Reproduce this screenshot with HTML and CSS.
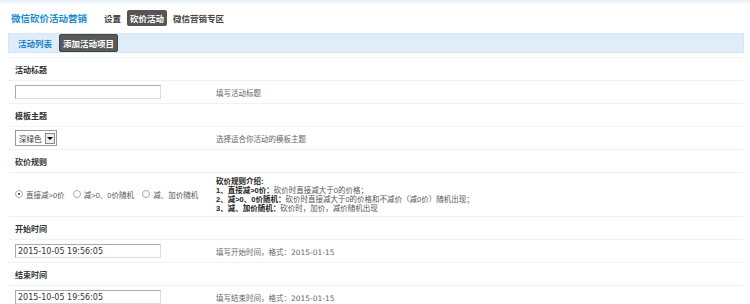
FILE: index.html
```html
<!DOCTYPE html>
<html>
<head>
    <title>微信砍价活动营销</title>
    <meta charset="UTF-8">
    <link rel="stylesheet" href="styles.css">
</head>
<body>
    <div class="topline"></div>
    <div class="header">
        <span class="logo">微信砍价活动营销</span>
        <a class="nav">设置</a>
        <a class="nav on">砍价活动</a>
        <a class="nav">微信营销专区</a>
    </div>
    <div class="tabs">
        <a class="tab">活动列表</a>
        <a class="tab on">添加活动项目</a>
    </div>
    <table class="form">
        <tr class="head"><td colspan="2">活动标题</td></tr>
        <tr>
            <td class="left"><input type="text" class="txt"></td>
            <td class="tip">填写活动标题</td>
        </tr>
        <tr class="head"><td colspan="2">模板主题</td></tr>
        <tr>
            <td class="left">
                <span class="select">深绿色<span class="arrow"></span></span>
            </td>
            <td class="tip">选择适合你活动的模板主题</td>
        </tr>
        <tr class="head"><td colspan="2">砍价规则</td></tr>
        <tr class="rules">
            <td class="left">
                <label class="radio"><span class="dot on"></span>直接减&gt;0价</label>
                <label class="radio"><span class="dot"></span>减&gt;0、0价随机</label>
                <label class="radio"><span class="dot"></span>减、加价随机</label>
            </td>
            <td class="desc">
                <b>砍价规则介绍:</b><br>
                <b>1、直接减&gt;0价：</b>砍价时直接减大于0的价格；<br>
                <b>2、减&gt;0、0价随机：</b>砍价时直接减大于0的价格和不减价（减0价）随机出现；<br>
                <b>3、减、加价随机：</b>砍价时，加价，减价随机出现
            </td>
        </tr>
        <tr class="head"><td colspan="2">开始时间</td></tr>
        <tr>
            <td class="left"><input type="text" class="txt date" value="2015-10-05 19:56:05"></td>
            <td class="tip">填写开始时间，格式：<span class="num">2015-01-15</span></td>
        </tr>
        <tr class="head"><td colspan="2">结束时间</td></tr>
        <tr>
            <td class="left"><input type="text" class="txt date" value="2015-10-05 19:56:05"></td>
            <td class="tip">填写结束时间，格式：<span class="num">2015-01-15</span></td>
        </tr>
    </table>
</body>
</html>
```

FILE: styles.css
```css
body { margin: 0; font-family: "Liberation Sans", "Noto Sans CJK SC", sans-serif; font-size: 8px; color: #333; background: #fff; }
.topline { height: 5px; background: linear-gradient(#e6eff8, #fff); }
.header { display: flex; align-items: center; height: 25px; padding: 0 11px; }
.logo { color: #1b8bcf; font-weight: bold; font-size: 9.5px; margin-right: 14px; }
.nav { color: #444; font-weight: bold; font-size: 8.5px; padding: 2px 3px; margin-right: 3px; border-radius: 2px; }
.nav.on { background: #555; color: #fff; }
.tabs { display: flex; align-items: center; height: 18px; margin: 3px 6px 0 8px; padding: 0 6px; background: #deedf9; border: 1px solid #d5e7f6; }
.tab { color: #1b7fc4; font-weight: bold; font-size: 8.5px; padding: 2px 3px; margin-right: 4px; border-radius: 2px; }
.tab.on { background: #595959; color: #fff; border: 1px solid #444; }
.form { width: 737px; margin: 4px 6px 0 8px; border-collapse: collapse; }
.form td { border-top: 1px solid #eaf2fa; height: 22px; padding: 0 0 0 7px; vertical-align: middle; }
.head td { font-weight: bold; color: #333; }
.left { width: 194px; }
.tip { color: #666; font-size: 7.5px; }
.num { font-family: "DejaVu Sans", sans-serif; font-size: 7.5px; }
.txt { width: 140px; height: 10px; margin: 0; padding: 1px 2px; border: 1px solid #aaa; border-right-color: #ddd; border-bottom-color: #ddd; font-size: 8px; color: #333; }
.date { font-family: "DejaVu Sans", sans-serif; }
.select { display: inline-flex; align-items: center; height: 14px; padding: 0 1px 0 3px; border: 1px solid #999; font-size: 7.5px; color: #333; }
.arrow { display: inline-block; width: 8px; height: 9px; margin-left: 3px; border: 1px solid #888; background: #eee; position: relative; }
.arrow:after { content: ""; position: absolute; left: 1px; top: 3px; border: 3px solid transparent; border-top-color: #000; border-bottom: 0; }
.rules td { height: 43px; }
.radio { display: inline-flex; align-items: center; margin-right: 6px; font-size: 7.5px; color: #555; }
.dot { display: inline-block; width: 6px; height: 6px; border: 1px solid #aaa; border-radius: 50%; margin-right: 3px; position: relative; }
.dot.on:after { content: ""; position: absolute; left: 2px; top: 2px; width: 2px; height: 2px; border-radius: 50%; background: #222; }
.desc { font-size: 7.5px; line-height: 9px; color: #555; }
.desc b { color: #222; }
```
